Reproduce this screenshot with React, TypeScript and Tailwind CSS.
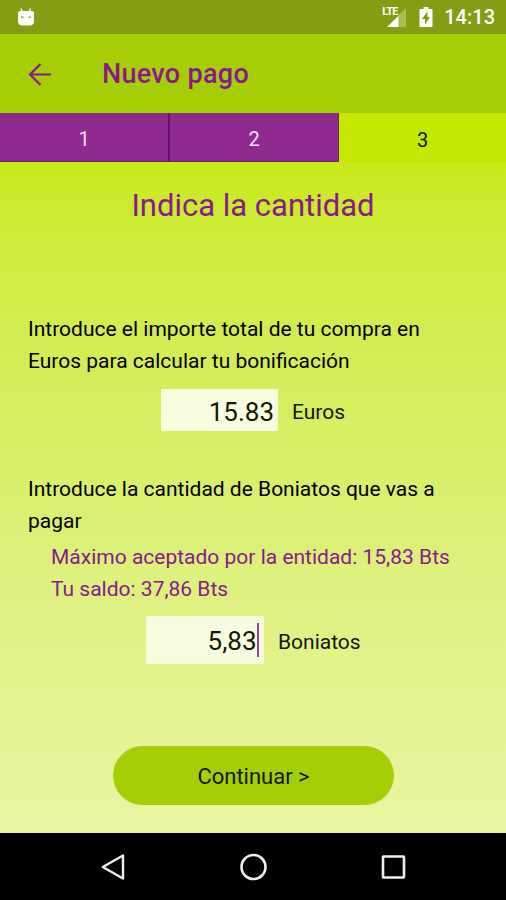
import { useState } from "react";

function StatusBar() {
  return (
    <div className="flex h-[34px] items-center justify-between bg-[#839e12] pr-[11px] pl-[17px] text-white">
      {/* Android */}
      <svg className="h-5 w-[18px]" viewBox="0 0 18 20" fill="none">
        <path
          d="M4 1.5L5.2 4.5M13.5 1.5L12.3 4.5"
          stroke="currentColor"
          strokeWidth="1.3"
        />
        <path
          d="M3 4H15Q17 4 17 6V14Q17 18.5 12.5 18.5H5.5Q1 18.5 1 14V6Q1 4 3 4Z"
          fill="currentColor"
        />
        <path d="M4 10.2H6.5M11.5 10.2H14" stroke="#839e12" strokeWidth="1.3" />
      </svg>
      <div className="flex items-center">
        <div className="flex h-[22px] w-[26px] items-start">
          <span className="font-[Roboto,sans-serif] text-[11px] leading-[11px] font-bold tracking-[-0.8px]">
            LTE
          </span>
          <svg className="-ml-[11px] h-[22px] w-5 shrink-0" viewBox="0 0 20 22">
            <path d="M0 21L19 2V21Z" fill="white" fillOpacity="0.3" />
            <path d="M0 21L11.5 10V21Z" fill="white" />
          </svg>
        </div>
        {/* Batterie */}
        <svg className="ml-[11px] h-[22px] w-[14px]" viewBox="0 0 14 22">
          <path
            d="M4.5 1H9.5V3H12.5Q13.5 3 13.5 4V20Q13.5 21 12.5 21H1.5Q.5 21 .5 20V4Q.5 3 1.5 3H4.5Z"
            fill="white"
          />
          <path d="M8.5 5.5L3 13H6V18.5L11 11H8.5Z" fill="#839e12" />
        </svg>
        <span className="ml-[11px] text-[20px] leading-6 font-medium">
          14:13
        </span>
      </div>
    </div>
  );
}

function NavigationBar() {
  return (
    <div className="flex h-[67px] items-center justify-between bg-black px-[98px] text-[#eeeeee]">
      <svg
        className="h-[30px] w-[30px]"
        viewBox="0 0 30 30"
        fill="none"
        stroke="currentColor"
        strokeWidth="2.4"
      >
        <path d="M4.8 15L25 3.5V26.5Z" strokeLinejoin="round" />
      </svg>
      <svg
        className="h-[30px] w-[30px]"
        viewBox="0 0 30 30"
        fill="none"
        stroke="currentColor"
        strokeWidth="2.6"
      >
        <circle cx="15.5" cy="15" r="12" />
      </svg>
      <svg
        className="h-[30px] w-[30px]"
        viewBox="0 0 30 30"
        fill="none"
        stroke="currentColor"
        strokeWidth="2.6"
      >
        <rect x="5" y="4.5" width="21" height="21" rx="0.5" />
      </svg>
    </div>
  );
}

export default function App() {
  const [euros, setEuros] = useState("15.83");

  return (
    <div className="flex h-[900px] w-[506px] flex-col overflow-hidden font-[Roboto,sans-serif] text-[#111805]">
      <StatusBar />
      <header className="flex h-[79px] items-center bg-[#a5cf04] pl-[28px] text-[#89198a]">
        <button>
          <svg
            className="h-6 w-6"
            viewBox="0 0 24 24"
            fill="none"
            stroke="currentColor"
            strokeWidth="2.2"
          >
            <path d="M23 12.5H2.5M12.5 2L2 12.5L12.5 23" />
          </svg>
        </button>
        <h1 className="ml-[50px] pt-0.5 text-[27px] font-medium tracking-[0.3px]">
          Nuevo pago
        </h1>
      </header>

      {/* Étapes */}
      <div className="flex h-[49px] text-xl">
        <div className="flex w-[170px] items-center justify-center border-r-2 border-b border-[#64156b] border-b-[#7d1685] bg-[#8f2a8f] pt-1 text-[#f6dff6]">
          1
        </div>
        <div className="flex w-[169px] items-center justify-center border-r border-b border-[#7d1685] bg-[#8f2a8f] pt-1 text-[#f6dff6]">
          2
        </div>
        <div className="flex flex-1 items-center justify-center bg-[#c5e704] pt-1">
          3
        </div>
      </div>

      <main className="flex h-[671px] flex-col bg-linear-to-b from-[#c9ea17] to-[#eaf5a2]">
        <h2 className="mt-6 text-center text-[31px] leading-10 text-[#89198a]">
          Indica la cantidad
        </h2>

        <p className="mt-[87px] ml-[28px] text-[21px] leading-8 text-black">
          Introduce el importe total de tu compra en
          <br />
          Euros para calcular tu bonificación
        </p>
        <div className="mt-[12px] flex h-[42px] items-center pl-[161px]">
          <input
            className="h-[42px] w-[117px] bg-[#f8fde2] pt-1 pr-1 text-right text-[26px] outline-none"
            value={euros}
            onChange={(e) => setEuros(e.target.value)}
          />
          <span className="ml-[14px] pt-1.5 text-[21px]">Euros</span>
        </div>

        <p className="mt-[42px] ml-[28px] text-[21px] leading-8 text-black">
          Introduce la cantidad de Boniatos que vas a
          <br />
          pagar
        </p>
        <p className="mt-1 ml-[51px] text-[21px] leading-8 text-[#89198a]">
          Máximo aceptado por la entidad: 15,83 Bts
          <br />
          Tu saldo: 37,86 Bts
        </p>
        <div className="mt-[11px] flex h-12 items-center pl-[146px]">
          <div className="flex h-12 w-[118px] items-center justify-end bg-[#f8fde2] pr-[5px] text-[26px]">
            <span className="pt-0.5">5,83</span>
            <span className="h-[34px] w-[2.5px] bg-[#98449b]" />
          </div>
          <span className="ml-[14px] pt-1.5 text-[21px]">Boniatos</span>
        </div>

        <button className="mt-[82px] ml-[113px] h-[59px] w-[281px] rounded-full bg-[#a5cf04] pt-0.5 text-[22px]">
          Continuar &gt;
        </button>
      </main>

      <NavigationBar />
    </div>
  );
}
